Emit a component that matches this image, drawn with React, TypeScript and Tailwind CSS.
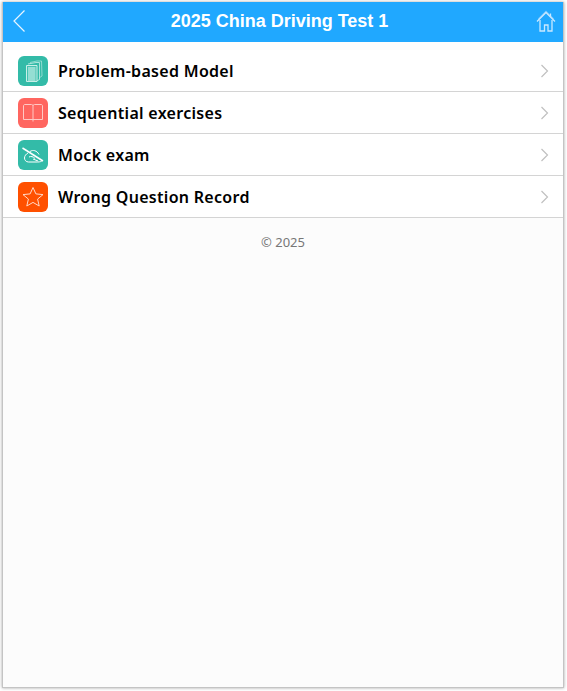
import type { ReactNode } from "react";

const rows: { label: string; color: string; icon: ReactNode }[] = [
  {
    label: "Problem-based Model",
    color: "bg-[#33bba8]",
    icon: (
      <g fill="none" stroke="#c9efe8" strokeWidth="1">
        <path d="M12 6.500l7-1.500h4.500l.5 15-3 2" opacity="0.6" />
        <path d="M10 8l8-1.500h3.500v17l-3 1.500" opacity="0.8" />
        <path d="M8.500 9.500h10.500v16h-10.500z" fill="#45c2b0" />
        <path d="M10 12h7.500M10 14h7.500M10 16h7.500M10 18h7.500M10 20h7.500M10 22h7.500M10 24h7.500" stroke="#e6faf6" />
      </g>
    ),
  },
  {
    label: "Sequential exercises",
    color: "bg-[#ff6660]",
    icon: (
      <g fill="none" stroke="#ffc9c5" strokeWidth="1">
        <path d="M5.500 8c0-1 .5-1.500 1.500-1.500h6.500c1 0 1.500.5 1.500 1.500 0-1 .5-1.500 1.500-1.500h6.500c1 0 1.500.5 1.500 1.500v13.500h-19z" />
        <path d="M15 8v15.500" />
      </g>
    ),
  },
  {
    label: "Mock exam",
    color: "bg-[#33bba8]",
    icon: (
      <g fill="none" stroke="#ffffff" strokeWidth="1">
        <path d="M4.500 8l20.500 13" strokeWidth="1.500" />
        <path d="M10 13c-2 1-3.500 3-3.500 5s1.500 4 4 4h9c2.500 0 4.500-.5 5-2" />
        <path d="M12 11.500c3-2 7-1 9 3" />
        <path d="M11 17c2-1 4-.5 6 1.500" />
        <path d="M15 19l5 2" />
      </g>
    ),
  },
  {
    label: "Wrong Question Record",
    color: "bg-[#ff5000]",
    icon: (
      <path
        d="M15 5.500l2.900 6.400 7.100.7-5.400 4.500 1.600 6.900-6.200-3.600-6.200 3.600 1.600-6.900-5.400-4.500 7.100-.7z"
        fill="none"
        stroke="#ffd9c8"
        strokeWidth="1"
      />
    ),
  },
];

export default function App() {
  return (
    <div className="h-[691px] w-[567px] overflow-hidden bg-white p-[2px]">
      <div className="flex h-[686px] w-[562px] flex-col border-r border-b border-l border-[#c4c4c4] bg-[#fcfcfc] shadow-[0_0_3px_rgba(0,0,0,0.35)]">
        <header className="flex h-[40px] items-center justify-between bg-[#20a8ff] pr-[7px] pb-[2px] pl-[8px] text-white">
          <svg width="18" height="24" viewBox="0 0 18 24" fill="none" stroke="#e8f5ff" strokeWidth="1.200">
            <path d="M13.500 1.500L3 12l10.500 10.500" />
          </svg>
          <h1 className="mr-[6px] font-['Liberation_Sans',Arial,sans-serif] text-[18px] font-bold">2025 China Driving Test 1</h1>
          <svg width="20" height="22" viewBox="0 0 20 22" fill="none" stroke="#c9e8ff" strokeWidth="1.300">
            <path d="M1 11.500L10 2.500l9 9" />
            <path d="M2.500 9L10 1.500 17.500 9" opacity="0.5" />
            <path d="M4 10V21h4.500v-6h3.500v6H16V10" />
            <path d="M14.500 3.500v3" />
          </svg>
        </header>
        <ul className="mt-[8px] bg-white">
          {rows.map((r) => (
            <li key={r.label} className="flex h-[42px] items-center border-b border-[#d4d4d4] pr-[14px] pl-[15px]">
              <span className={`flex h-[30px] w-[30px] items-center justify-center rounded-[6px] ${r.color}`}>
                <svg width="30" height="30" viewBox="0 0 30 30">
                  {r.icon}
                </svg>
              </span>
              <span className="ml-[10px] flex-1 font-['Noto_Sans',sans-serif] text-[16px] font-semibold tracking-[0.3px] text-black">{r.label}</span>
              <svg width="9" height="14" viewBox="0 0 9 14" fill="none" stroke="#c0c0c0" strokeWidth="1.200">
                <path d="M1.500 1L7.500 7l-6 6" />
              </svg>
            </li>
          ))}
        </ul>
        <p className="mt-[15px] text-center font-['Noto_Sans',sans-serif] text-[13px] leading-[18px] text-[#777777]">© 2025</p>
      </div>
    </div>
  );
}
